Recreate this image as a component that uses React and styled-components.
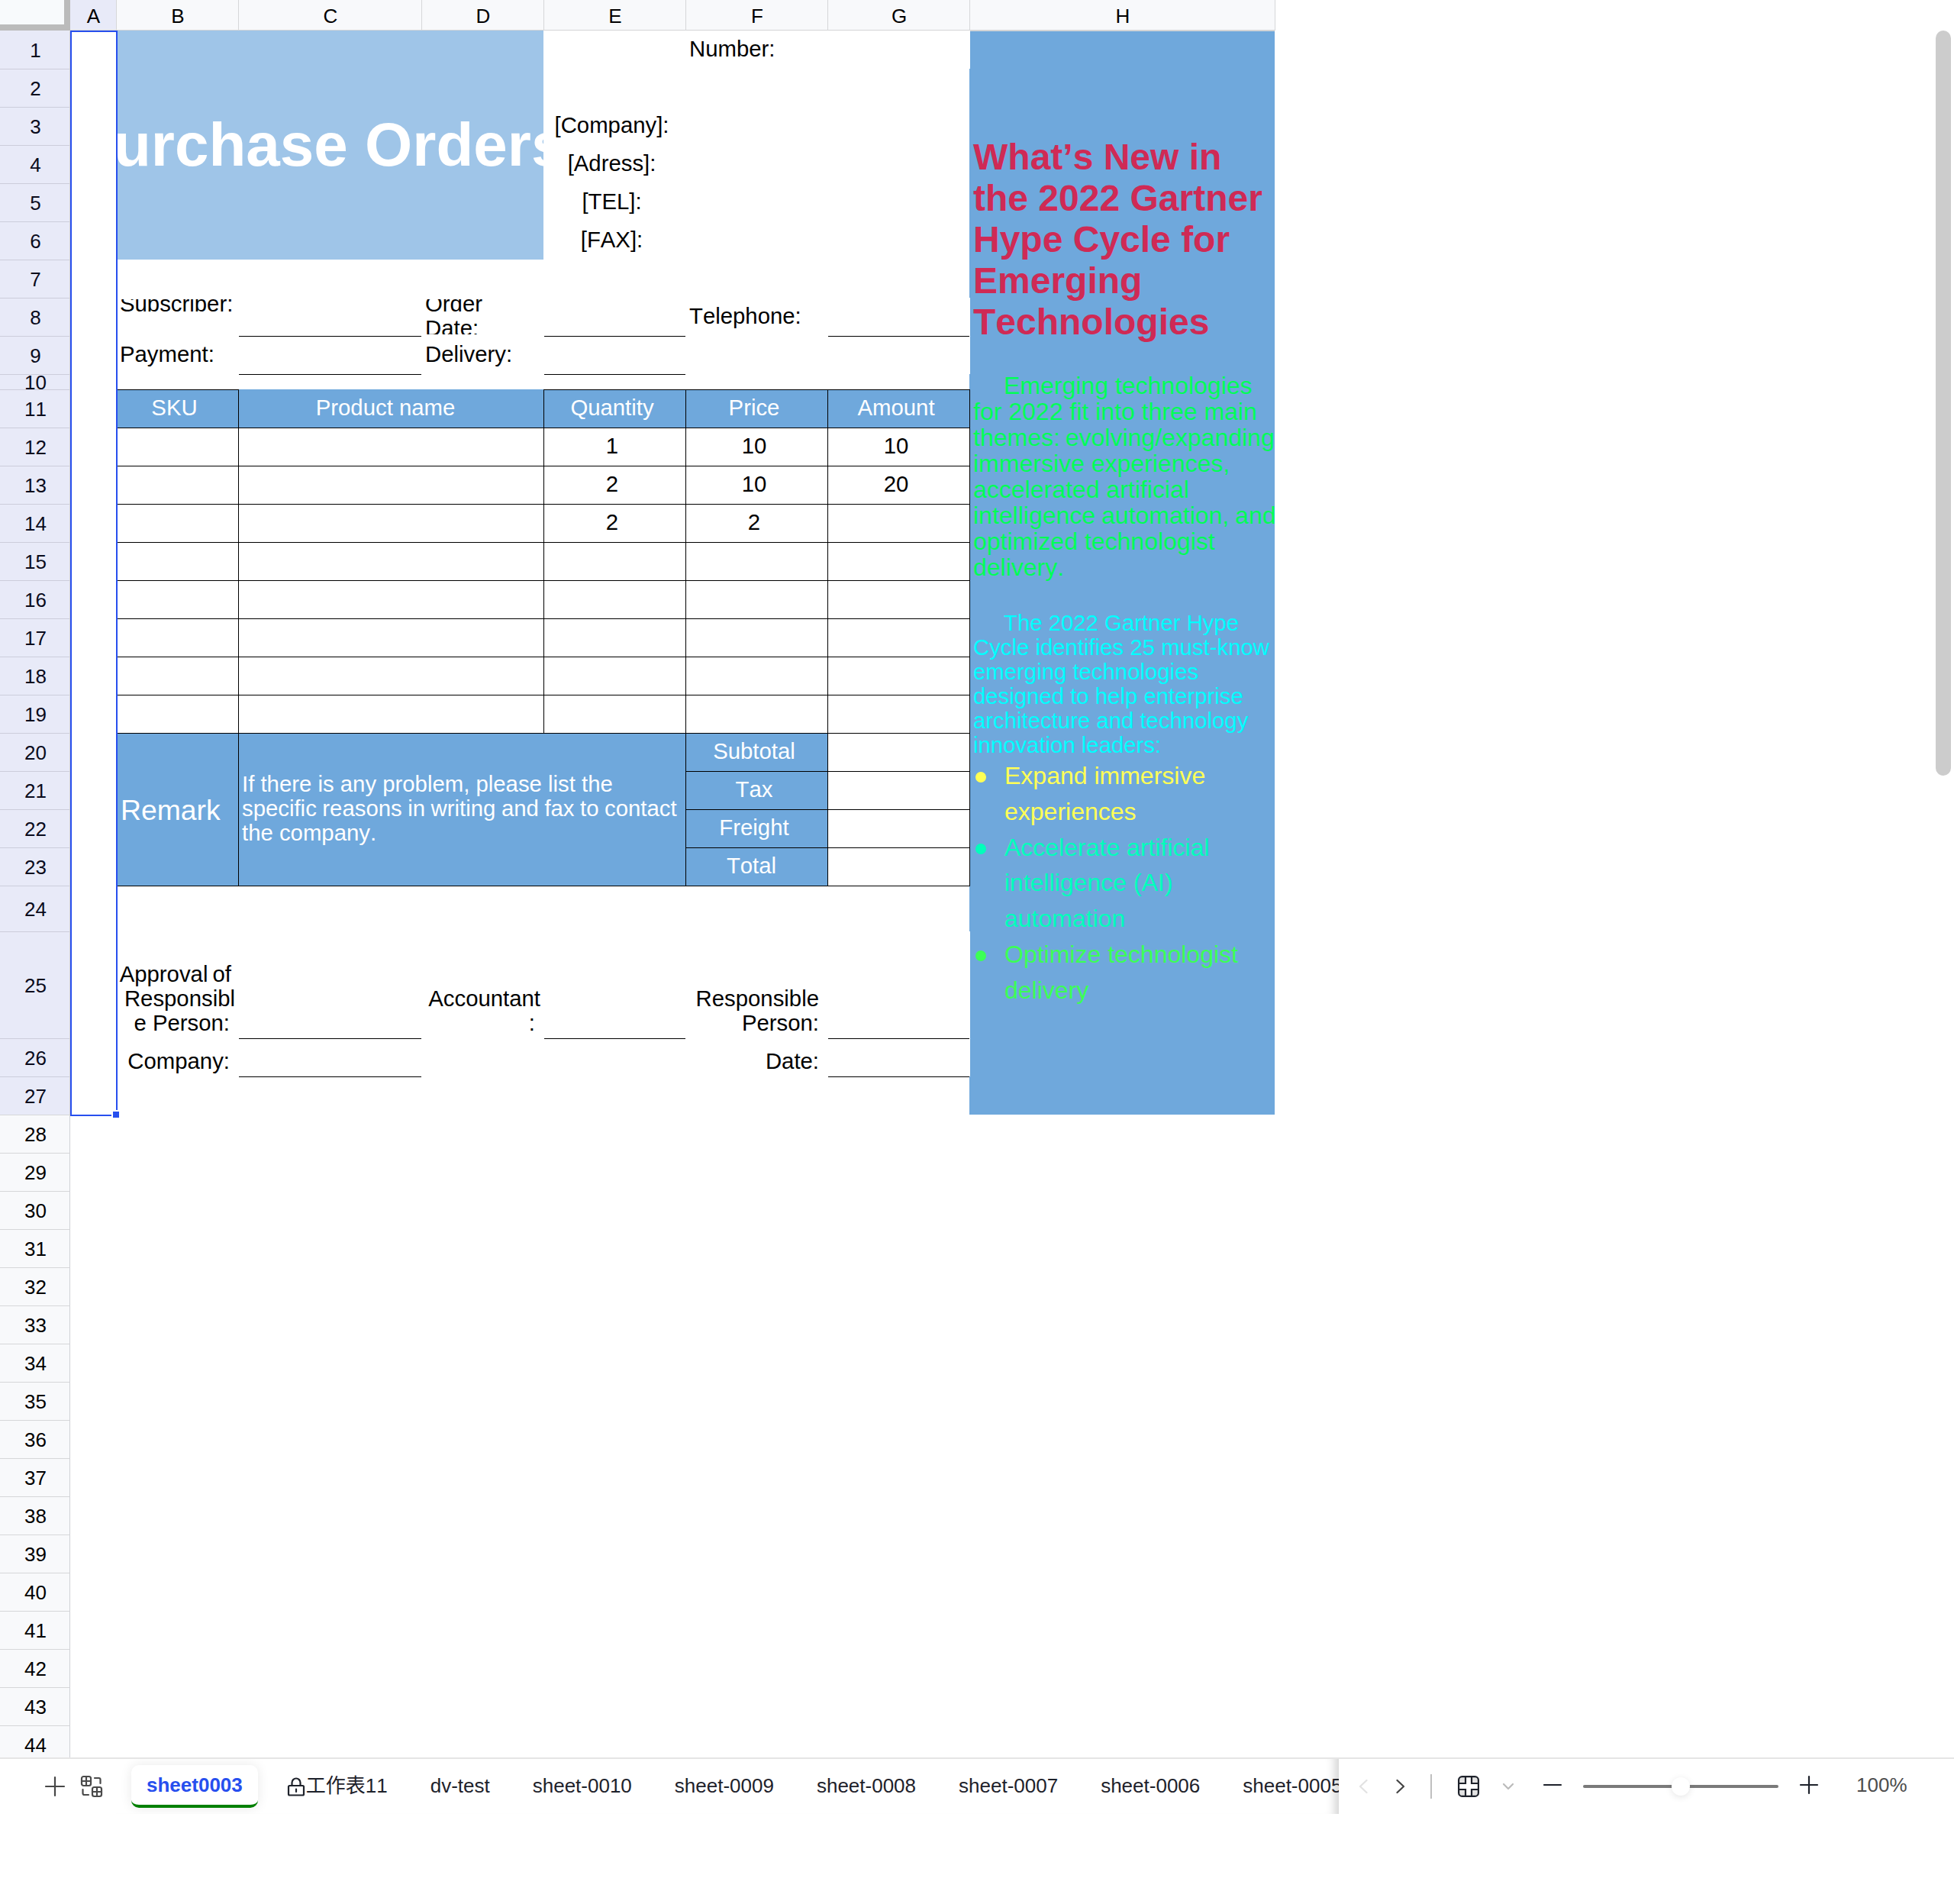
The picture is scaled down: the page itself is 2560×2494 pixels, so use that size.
import React from "react";
import styled, { createGlobalStyle, css } from "styled-components";

const GlobalStyle = createGlobalStyle`
  *, *::before, *::after { box-sizing: border-box; }
  body {
    margin: 0;
    background: #fff;
    color: #000;
    font-family: "Liberation Sans", Arial, "Noto Sans CJK SC", sans-serif;
    font-kerning: none;
  }
`;

const BLUE = "#6fa8dc";
const ACCENT = "#274fee";

const COLUMNS = [
  { name: "A", width: 60 },
  { name: "B", width: 160 },
  { name: "C", width: 240 },
  { name: "D", width: 160 },
  { name: "E", width: 186 },
  { name: "F", width: 186 },
  { name: "G", width: 186 },
  { name: "H", width: 400 },
];
const SPECIAL_HEIGHTS = { 10: 20, 24: 60, 25: 140 };
const ROWS = Array.from({ length: 44 }, (_, i) => ({
  number: i + 1,
  height: SPECIAL_HEIGHTS[i + 1] || 50,
}));
const COLUMN_TEMPLATE = COLUMNS.map((c) => `${c.width}px`).join(" ");
const ROW_TEMPLATE = ROWS.map((r) => `${r.height}px`).join(" ");

const Page = styled.div`
  display: flex;
  flex-direction: column;
  width: 2560px;
  height: 2494px;
  overflow: hidden;
`;

/* ---- headers ---- */

const ColumnHeader = styled.div`
  display: flex;
  height: 40px;
  flex: none;
`;

const Corner = styled.div`
  width: 92px;
  background: #f8fafc;
  border-right: 8px solid #bbb;
  border-bottom: 8px solid #bbb;
`;

const ColumnName = styled.div`
  display: flex;
  align-items: center;
  justify-content: center;
  width: ${(p) => p.$width}px;
  padding-top: 4px;
  padding-left: 1px;
  font-size: 26px;
  background: ${(p) => (p.$selected ? "#e8eaf8" : "#f8f9fb")};
  border-bottom: 1px solid #d3d4d6;
  border-left: ${(p) => (p.$selected ? "none" : "1px solid #d6d7d9")};
  &:last-child {
    width: ${(p) => p.$width + 1}px;
    border-right: 1px solid #d6d7d9;
  }
`;

const Body = styled.div`
  display: flex;
  align-items: flex-start;
  height: 2262px;
  flex: none;
  overflow: hidden;
`;

const RowHeader = styled.div`
  width: 92px;
  flex: none;
`;

const RowNumber = styled.div`
  display: flex;
  align-items: center;
  justify-content: center;
  height: ${(p) => p.$height}px;
  padding-top: 1px;
  padding-left: 2px;
  font-size: 26px;
  line-height: 30px;
  color: ${(p) => (p.$selected ? "#0a0b1c" : "#000")};
  background: ${(p) => (p.$selected ? "#e8eaf8" : "#f8f9fb")};
  border-right: 1px solid #d0d1d6;
  border-top: 1px solid ${(p) => (p.$selected ? "#cccddb" : "#d6d7d9")};
  &:first-child { border-top-color: transparent; }
`;

/* ---- cells ---- */

const Sheet = styled.div`
  display: grid;
  grid-template-columns: ${COLUMN_TEMPLATE};
  grid-template-rows: ${ROW_TEMPLATE};
  flex: none;
`;

const SIDES = { t: "top", r: "right", b: "bottom", l: "left" };

const Cell = styled.div`
  grid-column: ${(p) => p.$col} / span ${(p) => p.$colSpan || 1};
  grid-row: ${(p) => p.$row} / span ${(p) => p.$rowSpan || 1};
  display: flex;
  flex-direction: column;
  justify-content: center;
  overflow: hidden;
  min-width: 0;
  padding: 0 3px 2px 5px;
  font-size: 29.33px;
  line-height: 32px;
  white-space: nowrap;
  background: ${(p) => p.$fill || "transparent"};
  color: ${(p) => p.$color || "#000"};
  ${(p) => (p.$edges || "").split("").filter(Boolean).map((s) => css`border-${SIDES[s]}: 1px solid #000;`)}
  ${(p) => (p.$edges || "").includes("l") && css`padding: 0 3px 3px 4px;`}
  ${(p) => (p.$edges || "").includes("r") && css`margin-right: -1px;`}
  ${(p) => (p.$edges || "").includes("b") && css`margin-bottom: -1px;`}
  ${(p) => p.$align === "center" && css`align-items: center; padding: 0 ${p.$nudge || 7}px 3px 0;`}
  ${(p) => p.$align === "right" && css`align-items: flex-end; padding: 0 4px 0 2px;`}
  ${(p) => p.$bottom !== undefined && css`justify-content: flex-end; padding-bottom: ${p.$bottom}px;`}
`;

const Underline = styled.div`
  grid-column: ${(p) => p.$col};
  grid-row: ${(p) => p.$row};
  margin: 0 0 -1px 1px;
  border-bottom: 1px solid #000;
`;

const Clip = styled.div`
  display: flex;
  flex-direction: column;
  justify-content: center;
  height: 46px;
  margin-top: 2px;
  padding-bottom: 2px;
  overflow: hidden;
`;

const SideEdge = styled.div`
  grid-column: 8;
  grid-row: ${(p) => p.$row} / span ${(p) => p.$rowSpan};
  width: 1px;
  background: #fff;
  z-index: 1;
`;

const Title = styled.div`
  padding-top: 2px;
  font-size: 80px;
  line-height: 90px;
  font-weight: 700;
  align-self: center;
`;

const RemarkLabel = styled.div`
  padding: 2px 0 0 1px;
  font-size: 37.33px;
  line-height: 42px;
`;

const Line = styled.div`
  padding-right: ${(p) => p.$end || 0}px;
  word-spacing: ${(p) => p.$squeeze || 0}px;
`;

const Article = styled.div`
  grid-column: 8;
  grid-row: 1 / span 27;
  padding: 138px 0 0 5px;
  background: ${BLUE};
  border-top: 1px solid #d3d4d6;
  overflow: hidden;
  white-space: nowrap;
`;

const ArticleTitle = styled.div`
  font-size: 48px;
  line-height: 54px;
  font-weight: 700;
  color: #cf2a55;
`;

const Paragraph = styled.div`
  margin-top: ${(p) => p.$gap}px;
  font-size: ${(p) => p.$size}px;
  line-height: ${(p) => p.$leading}px;
  color: ${(p) => p.$color};
`;

const TextLine = styled.div`
  padding-left: ${(p) => p.$indent || 0}px;
  word-spacing: ${(p) => p.$squeeze || 0}px;
`;

const Bullets = styled.ul`
  margin: 0;
  padding: 1px 0 0;
  list-style: none;
`;

const Bullet = styled.li`
  display: flex;
  color: ${(p) => p.$color};
  font-size: 32px;
  line-height: 46.8px;
  &::before {
    content: "";
    width: 14px;
    height: 14px;
    margin: 18px 24px 0 3px;
    border-radius: 50%;
    background: currentColor;
  }
`;

const Selection = styled.div`
  grid-column: 1;
  grid-row: 1 / span 27;
  position: relative;
  z-index: 2;
  margin: 0 -2px -2px 0;
  border: 2px solid ${ACCENT};
  &::after {
    content: "";
    position: absolute;
    right: -6px;
    bottom: -6px;
    width: 12px;
    height: 12px;
    background: ${ACCENT};
    border: 2px solid #fff;
  }
`;

const Scrollbar = styled.div`
  width: 20px;
  height: 976px;
  margin: 0 4px 0 auto;
  border-radius: 10px;
  background: #ccc;
`;

/* ---- footer ---- */

const Footer = styled.div`
  display: flex;
  height: 74px;
  flex: none;
  border-top: 2px solid #e5e5e5;
  color: #1e222b;
  font-size: 26px;
`;

const SheetTools = styled.div`
  display: flex;
  align-items: center;
  gap: 18px;
  width: 152px;
  padding-left: 58px;
  flex: none;
`;

const Tabs = styled.div`
  display: flex;
  align-items: flex-start;
  gap: 16px;
  width: 1602px;
  padding: 8px 0 0 20px;
  flex: none;
  overflow: hidden;
  box-shadow: inset -16px 0 14px -12px rgba(0, 0, 0, 0.2);
`;

const Tab = styled.div`
  display: flex;
  align-items: center;
  height: 56px;
  padding: 0 20px 2px;
  flex: none;
  border-radius: 10px;
  line-height: 30px;
  white-space: nowrap;
  ${(p) => p.$active && css`
    padding-top: 2px;
    color: ${ACCENT};
    font-weight: 700;
    background: #fff;
    border-bottom: 4px solid #008000;
    box-shadow: 0 0 16px rgba(0, 0, 0, 0.09);
  `}
`;

const Controls = styled.div`
  display: flex;
  align-items: center;
  flex: 1;
  background: #fff;
`;

const Icon = styled.svg`
  flex: none;
  width: ${(p) => p.$w}px;
  height: ${(p) => p.$h || p.$w}px;
  margin-left: ${(p) => p.$ml || 0}px;
  margin-top: ${(p) => p.$mt || 0}px;
  color: ${(p) => p.$color || "#1e222b"};
  fill: none;
  stroke: currentColor;
  stroke-width: 2.2;
  stroke-linecap: round;
  stroke-linejoin: round;
`;

const Divider = styled.div`
  width: 2px;
  height: 32px;
  margin-left: 33px;
  background: #bfbfbf;
`;

const Slider = styled.div`
  display: flex;
  align-items: center;
  justify-content: center;
  width: 256px;
  height: 4px;
  margin-left: 27px;
  border-radius: 2px;
  background: #7a7a7a;
`;

const Thumb = styled.div`
  width: 24px;
  height: 24px;
  flex: none;
  border-radius: 50%;
  background: #fff;
  box-shadow: 0 2px 10px rgba(0, 0, 0, 0.1);
`;

const Zoom = styled.div`
  margin: -4px 0 0 49px;
  color: #4d4d4d;
`;

const ITEM_ROWS = [
  ["1", "10", "10"],
  ["2", "10", "20"],
  ["2", "2", ""],
  ["", "", ""],
  ["", "", ""],
  ["", "", ""],
  ["", "", ""],
  ["", "", ""],
];

const CONTACTS = ["[Company]:", "[Adress]:", "[TEL]:", "[FAX]:"];
const TOTALS = [
  { label: "Subtotal" },
  { label: "Tax" },
  { label: "Freight" },
  { label: "Total", nudge: 14 },
];

const UNDERLINES = [
  [8, 3], [8, 5], [8, 7], [9, 3], [9, 5],
  [25, 3], [25, 5], [25, 7], [26, 3], [26, 7],
];

const TABS = [
  "dv-test", "sheet-0010", "sheet-0009", "sheet-0008",
  "sheet-0007", "sheet-0006", "sheet-0005",
];

function OrderForm() {
  return (
    <>
      <Cell $row={1} $rowSpan={6} $col={2} $colSpan={3} $fill="#9fc5e8" $color="#fff" $align="center" $nudge={28}>
        <Title>Purchase Orders</Title>
      </Cell>
      <Cell $row={1} $col={6}>Number:</Cell>
      {CONTACTS.map((label, i) => (
        <Cell key={label} $row={3 + i} $col={5} $align="center">{label}</Cell>
      ))}

      <Cell $row={8} $col={2}>
        <Clip>
          <Line>Subscriber:</Line>
          <Line>&nbsp;</Line>
        </Clip>
      </Cell>
      <Cell $row={8} $col={4}>
        <Clip>
          <Line>Order</Line>
          <Line>Date:</Line>
        </Clip>
      </Cell>
      <Cell $row={8} $col={6}>Telephone:</Cell>
      <Cell $row={9} $col={2}>Payment:</Cell>
      <Cell $row={9} $col={4}>Delivery:</Cell>
      {UNDERLINES.map(([row, col]) => (
        <Underline key={`${row}-${col}`} $row={row} $col={col} />
      ))}

      <Cell $row={11} $col={3} $colSpan={2} $fill={BLUE} $color="#fff" $align="center" $nudge={14}>Product name</Cell>
      <Cell $row={11} $col={2} $fill={BLUE} $color="#fff" $align="center" $edges="trb">SKU</Cell>
      {["Quantity", "Price", "Amount"].map((label, i) => (
        <Cell key={label} $row={11} $col={5 + i} $fill={BLUE} $color="#fff" $align="center" $edges="tlrb">{label}</Cell>
      ))}

      {ITEM_ROWS.map((values, i) => (
        <React.Fragment key={i}>
          <Cell $row={12 + i} $col={2} $edges="trb" />
          <Cell $row={12 + i} $col={3} $colSpan={2} $edges="tlrb" />
          {values.map((v, j) => (
            <Cell key={j} $row={12 + i} $col={5 + j} $align="center" $edges="tlrb">{v}</Cell>
          ))}
        </React.Fragment>
      ))}

      <Cell $row={20} $rowSpan={4} $col={2} $fill={BLUE} $color="#fff" $edges="trb">
        <RemarkLabel>Remark</RemarkLabel>
      </Cell>
      <Cell $row={20} $rowSpan={4} $col={3} $colSpan={3} $fill={BLUE} $color="#fff" $edges="tlrb">
        <Line>If there is any problem, please list the</Line>
        <Line $squeeze={-0.6}>specific reasons in writing and fax to contact</Line>
        <Line>the company.</Line>
      </Cell>
      {TOTALS.map(({ label, nudge }, i) => (
        <React.Fragment key={label}>
          <Cell $row={20 + i} $col={6} $fill={BLUE} $color="#fff" $align="center" $nudge={nudge} $edges="tlrb">{label}</Cell>
          <Cell $row={20 + i} $col={7} $edges="tlrb" />
        </React.Fragment>
      ))}

      <Cell $row={25} $col={2} $align="right" $bottom={4}>
        <Line $end={5} $squeeze={-2}>Approval of</Line>
        <Line>Responsibl</Line>
        <Line $end={7}>e Person:</Line>
      </Cell>
      <Cell $row={25} $col={4} $align="right" $bottom={4}>
        <Line>Accountant</Line>
        <Line $end={7}>:</Line>
      </Cell>
      <Cell $row={25} $col={6} $align="right" $bottom={4}>
        <Line $end={7}>Responsible</Line>
        <Line $end={7}>Person:</Line>
      </Cell>
      <Cell $row={26} $col={2} $align="right" $bottom={4}><Line $end={7}>Company:</Line></Cell>
      <Cell $row={26} $col={6} $align="right" $bottom={4}><Line $end={7}>Date:</Line></Cell>
    </>
  );
}

function SideArticle() {
  return (
    <Article>
      <ArticleTitle>
        <TextLine>What’s New in</TextLine>
        <TextLine>the 2022 Gartner</TextLine>
        <TextLine>Hype Cycle for</TextLine>
        <TextLine>Emerging</TextLine>
        <TextLine>Technologies</TextLine>
      </ArticleTitle>
      <Paragraph $gap={39} $size={32} $leading={34} $color="#00ff55">
        <TextLine $indent={40}>Emerging technologies</TextLine>
        <TextLine>for 2022 fit into three main</TextLine>
        <TextLine $squeeze={-2}>themes: evolving/expanding</TextLine>
        <TextLine>immersive experiences,</TextLine>
        <TextLine>accelerated artificial</TextLine>
        <TextLine $squeeze={-1}>intelligence automation, and</TextLine>
        <TextLine>optimized technologist</TextLine>
        <TextLine>delivery.</TextLine>
      </Paragraph>
      <Paragraph $gap={40} $size={29.33} $leading={32} $color="#00ffff">
        <TextLine $indent={40}>The 2022 Gartner Hype</TextLine>
        <TextLine>Cycle identifies 25 must-know</TextLine>
        <TextLine>emerging technologies</TextLine>
        <TextLine>designed to help enterprise</TextLine>
        <TextLine>architecture and technology</TextLine>
        <TextLine>innovation leaders:</TextLine>
      </Paragraph>
      <Bullets>
        <Bullet $color="#ffff55"><div>Expand immersive<br />experiences</div></Bullet>
        <Bullet $color="#00ffbb"><div>Accelerate artificial<br />intelligence (AI)<br />automation</div></Bullet>
        <Bullet $color="#3cff55"><div>Optimize technologist<br />delivery</div></Bullet>
      </Bullets>
    </Article>
  );
}

function StatusBar() {
  return (
    <Footer>
      <SheetTools>
        <Icon $w={28} viewBox="0 0 28 28" $color="#474747">
          <path d="M14 2v24M2 14h24" />
        </Icon>
        <Icon $w={32} viewBox="0 0 32 32" $color="#4a4a4a">
          <rect x="3" y="3" width="12" height="12" rx="2.5" />
          <path d="M9 3v12M3 9h12" />
          <rect x="17" y="17" width="12" height="12" rx="2.5" />
          <path d="M23 17v12M17 23h12" />
          <path d="M20 5h5.5a2 2 0 0 1 2 2v5M4.500 20v5a2 2 0 0 0 2 2H12" />
        </Icon>
      </SheetTools>
      <Tabs>
        <Tab $active>sheet0003</Tab>
        <Tab>
          <Icon $w={26} viewBox="0 0 26 26" $ml={1} $mt={3}>
            <rect x="3" y="11" width="20" height="12.500" rx="1.500" />
            <path d="M7.500 11V7a5.500 5.500 0 0 1 11 0v4M13 15.500v3.500" />
          </Icon>
          工作表11
        </Tab>
        {TABS.map((name) => <Tab key={name}>{name}</Tab>)}
      </Tabs>
      <Controls>
        <Icon $w={12} $h={20} $ml={26} viewBox="0 0 12 20" $color="#e2e2e2">
          <path d="M10.500 2L2 10l8.500 8" />
        </Icon>
        <Icon $w={12} $h={20} $ml={37} viewBox="0 0 12 20" $color="#444">
          <path d="M1.500 2L10 10l-8.500 8" />
        </Icon>
        <Divider />
        <Icon $w={28} $ml={34} viewBox="0 0 28 28">
          <rect x="1" y="1" width="26" height="26" rx="4.500" fill="#e3e3e3" stroke="none" />
          <path d="M10 1h8v9h9v8h-9v9h-8v-9H1v-8h9z" fill="#fff" stroke="none" />
          <path d="M10 1v9H1M18 1v9h9M10 27v-9H1M18 27v-9h9" strokeLinejoin="miter" />
          <rect x="1.100" y="1.100" width="25.800" height="25.800" rx="4.500" />
        </Icon>
        <Icon $w={16} $h={10} $ml={30} viewBox="0 0 16 10" $color="#bbb">
          <path d="M2 2l6 6 6-6" />
        </Icon>
        <Icon $w={26} $ml={37} $mt={-4} viewBox="0 0 26 26">
          <path d="M2 13h22" />
        </Icon>
        <Slider><Thumb /></Slider>
        <Icon $w={26} $ml={27} $mt={-4} viewBox="0 0 26 26">
          <path d="M13 2v22M2 13h22" />
        </Icon>
        <Zoom>100%</Zoom>
      </Controls>
    </Footer>
  );
}

export default function App() {
  return (
    <Page>
      <GlobalStyle />
      <ColumnHeader>
        <Corner />
        {COLUMNS.map((c) => (
          <ColumnName key={c.name} $width={c.width} $selected={c.name === "A"}>{c.name}</ColumnName>
        ))}
      </ColumnHeader>
      <Body>
        <RowHeader>
          {ROWS.map((r) => (
            <RowNumber key={r.number} $height={r.height} $selected={r.number <= 27}>{r.number}</RowNumber>
          ))}
        </RowHeader>
        <Sheet>
          <SideArticle />
          <OrderForm />
          <SideEdge $row={1} $rowSpan={1} />
          <SideEdge $row={8} $rowSpan={2} />
          <SideEdge $row={25} $rowSpan={2} />
          <Selection />
        </Sheet>
        <Scrollbar />
      </Body>
      <StatusBar />
    </Page>
  );
}
